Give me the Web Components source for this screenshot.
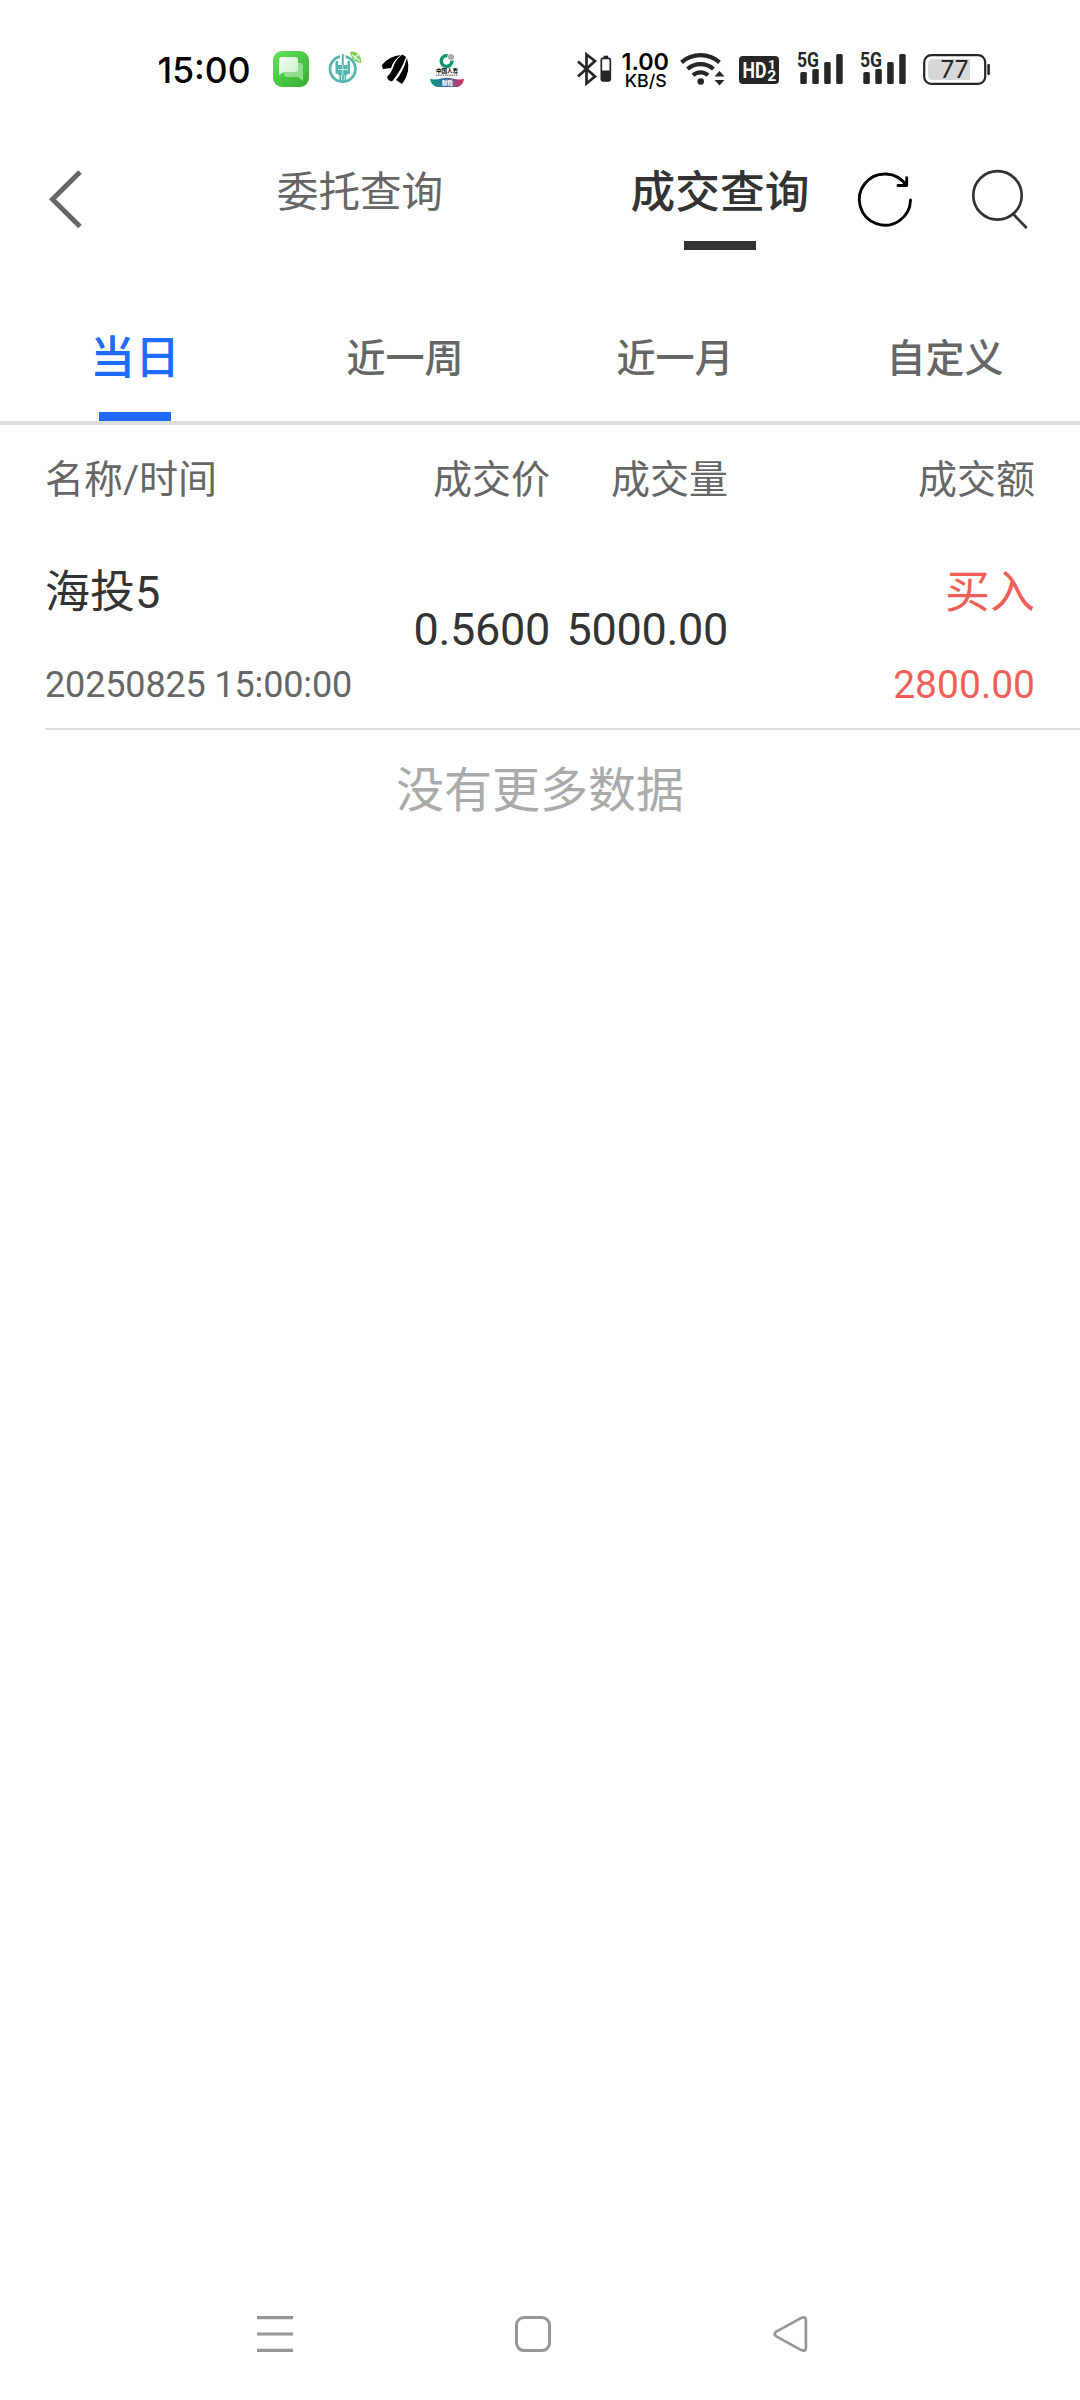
<!DOCTYPE html>
<html lang="zh-CN">
<head>
<meta charset="utf-8">
<title>成交查询</title>
<style>
html,body{margin:0;padding:0;background:#fff}
body{width:1080px;height:2400px;overflow:hidden;font-family:Roboto,"Noto Sans CJK SC",sans-serif;color:#333}
</style>
</head>
<body>
<trade-app></trade-app>
<script>
const define = (name, html) => {
  const t = document.createElement('template');
  t.innerHTML = html;
  customElements.define(name, class extends HTMLElement {
    constructor() {
      super();
      this.attachShadow({ mode: 'open' }).append(t.content.cloneNode(true));
    }
  });
};

define('signal-icon', `
<style>:host{display:block;width:48px;height:36px}svg{display:block;overflow:visible}</style>
<svg width="48" height="36" fill="#262626">
  <text x="0" y="15.800" font-family="Roboto" font-size="20.500" font-weight="700" textLength="22" lengthAdjust="spacingAndGlyphs">5G</text>
  <rect x="3.300" y="21" width="6.500" height="12" rx="1.500"/>
  <rect x="15.300" y="18" width="6.500" height="15" rx="1.500"/>
  <rect x="27.200" y="11" width="6.500" height="22" rx="1.500"/>
  <rect x="39.200" y="3" width="6.500" height="30" rx="1.500"/>
</svg>`);

define('status-bar', `
<style>
:host{display:flex;height:140px;box-sizing:border-box;padding:48px 88px 0 156px;justify-content:space-between;align-items:flex-start}
div{display:flex;align-items:flex-start}
svg{display:block;flex:none;overflow:visible}
</style>
<div>
  <svg width="96" height="42"><text x="1.500" y="34.600" font-family="Inter" font-size="36" font-weight="450" textLength="93" lengthAdjust="spacingAndGlyphs">15:00</text></svg>
  <svg width="38" height="42" style="margin-left:20px">
    <defs>
      <linearGradient id="g" x1="0" y1="0" x2="1" y2="1"><stop offset="0" stop-color="#62e45c"/><stop offset="1" stop-color="#35ad30"/></linearGradient>
      <linearGradient id="w" x1="0" y1="0" x2="1" y2="1"><stop offset="0" stop-color="#fff"/><stop offset="1" stop-color="#c9f3c7"/></linearGradient>
    </defs>
    <rect x="1" y="3" width="36" height="36" rx="9" fill="url(#g)"/>
    <path d="M15 15h13q3 0 3 3v15l-5-4H15q-3 0-3-3v-8q0-3 3-3z" fill="#9fe09b" opacity=".85"/>
    <path d="M10 9h13q3 0 3 3v9q0 3-3 3H12l-5 3V12q0-3 3-3z" fill="url(#w)" opacity=".95"/>
  </svg>
  <svg width="36" height="42" style="margin-left:17px">
    <circle cx="15.700" cy="21" r="12.700" fill="none" stroke="#55b5ad" stroke-width="2.700"/>
    <path d="M13 3h5.400v12H13z" fill="#fff"/>
    <path d="M14.800 6v28h2V6zM8.500 13h2.500v10h3v10h-1.700v-7.200H8.500zM20.500 13h2.500v12.800h-3.800V33h-1.700V23h3z" fill="#55b5ad"/>
    <path d="M11 17h9.600v10H11z" fill="#55b5ad"/>
    <path d="M11 21.500h10M15.800 17v10" stroke="#fff" stroke-width=".7"/>
    <path d="M23 4q5-2 9 3 3 4 2 8-7-1-9-5-1-3-2-6z" fill="#7bcf5b"/>
    <path d="M25 7l8 6M31 6l-4 6" stroke="#f4fff0" stroke-width="1.300"/>
  </svg>
  <svg width="28" height="42" style="margin-left:18px">
    <path d="M1 17Q8 8 20 7Q13 11 10 20L2 21Q1 19 1 17ZM21.500 6.500L25 9Q20 23 11 33.500Q7 33 6 29Q11 24 13 17Q16 10 21.500 6.500ZM26 10Q28 17 27 23Q25 31 21 36L15 32Q22 24 26 10Z" fill="#000"/>
  </svg>
  <svg width="36" height="42" style="margin-left:20px">
    <defs><linearGradient id="r"><stop offset="0" stop-color="#0a9472"/><stop offset=".45" stop-color="#376fa0"/><stop offset=".75" stop-color="#8b4c82"/><stop offset="1" stop-color="#ed234b"/></linearGradient></defs>
    <path d="M18.500 7.700a5.400 5.400 0 1 0 4.500 5" fill="none" stroke="#09946b" stroke-width="3.400"/>
    <circle cx="22" cy="9" r="3" fill="#aaa"/>
    <text x="7" y="25.300" font-family="Noto Sans CJK SC" font-size="5.600" font-weight="700" textLength="22" lengthAdjust="spacing">中国人寿</text>
    <path d="M7 27.200h22" stroke="#555" stroke-width="1" stroke-dasharray="1.500 .7"/>
    <path d="M1 31q6 1 11-.5 6-1.500 12 0 5 1.500 11 .5-1 6-6 8H8q-6-2-7-8z" fill="url(#r)"/>
    <text x="13" y="37" font-family="Noto Sans CJK SC" font-size="5.500" font-weight="900" fill="#fff" textLength="11">财险</text>
  </svg>
</div>
<div>
  <svg width="36" height="42">
    <path d="M2 13.500L19 28.500L10.500 35.500V6.500L19 13L2 28.500" fill="none" stroke="#262626" stroke-width="2.700"/>
    <rect x="25.300" y="10.300" width="9" height="22.500" rx="1.500" fill="none" stroke="#262626" stroke-width="1.700"/>
    <rect x="27.500" y="7.700" width="4.700" height="2.500" fill="#262626"/><rect x="25.500" y="22.500" width="8.600" height="10" fill="#262626"/>
  </svg>
  <svg width="48" height="44" style="margin-left:10px" font-family="Inter" fill="#000">
    <text x="-.5" y="22" font-size="23" font-weight="600" textLength="47.500" lengthAdjust="spacingAndGlyphs">1.00</text>
    <text x="2.800" y="38.500" font-size="17.500" font-weight="550" textLength="42" lengthAdjust="spacingAndGlyphs">KB/S</text>
  </svg>
  <svg width="46" height="42" style="margin-left:10px">
    <g fill="none" stroke="#262626" stroke-width="4.200"><path d="M1.500 14.300a29 29 0 0 1 38 0M7.500 21a19.500 19.500 0 0 1 26 0M13 27.300a11 11 0 0 1 15 0"/></g>
    <circle cx="20.700" cy="33.500" r="3.300" fill="#262626"/>
    <path d="M34.500 28.500l5-5.500 5 5.500zM34.500 32l5 5.500 5-5.500z" fill="#262626"/>
  </svg>
  <svg width="42" height="42" style="margin-left:12px" font-family="Roboto" font-weight="700" fill="#fff">
    <rect x="1" y="8" width="40" height="28" rx="4" fill="#262626"/>
    <text x="4.500" y="30" font-size="22.500" textLength="24" lengthAdjust="spacingAndGlyphs">HD</text>
    <text x="30" y="20.500" font-size="13.500">1</text><text x="29.300" y="33" font-size="14" textLength="9" lengthAdjust="spacingAndGlyphs">2</text>
  </svg>
  <signal-icon style="margin:3px 0 0 17px"></signal-icon>
  <signal-icon style="margin:3px 0 0 15px"></signal-icon>
  <svg width="69" height="42" style="margin-left:15px">
    <rect x="1.200" y="7.200" width="61" height="28.600" rx="7" fill="none" stroke="#262626" stroke-width="2.200"/>
    <path d="M10 11h37v21H10q-5 0-5-5V16q0-5 5-5z" fill="#d8d8d8"/>
    <rect x="64.300" y="16" width="2.600" height="11" rx="1" fill="#262626"/>
    <text x="17.500" y="30.100" font-family="Inter" font-size="24" textLength="28" lengthAdjust="spacingAndGlyphs" fill="#262626">77</text>
  </svg>
</div>`);

define('title-tab', `
<style>
:host{display:flex;flex:1;flex-direction:column;align-items:center;color:#666;font-size:41.600px;line-height:66px;padding-top:20px}
:host([active]){color:#333;font-size:44.700px;font-weight:500}
i{display:none;width:72px;height:9px;background:#333;margin-top:15px}
:host([active]) i{display:block}
</style><span><slot></slot></span><i></i>`);

define('title-bar', `
<style>
:host{display:grid;grid-template-columns:180px 720px 180px;height:170px}
nav{display:flex}
svg{display:block}
.tools{display:flex;margin-left:-46px;padding-top:28px;gap:51px}
.back{padding:28px 0 0 45px}
</style>
<div class="back"><svg width="42" height="66"><path d="M35 4L7.500 31.300L35 58.500" fill="none" stroke="#666" stroke-width="5"/></svg></div>
<nav><title-tab>委托查询</title-tab><title-tab active>成交查询</title-tab></nav>
<div class="tools">
  <svg width="62" height="66" fill="none" stroke="#000" stroke-width="2.900" stroke-linecap="round" stroke-linejoin="round"><path d="M56.500 32A25.600 25.600 0 1 1 52.300 17.500M52.700 9.800V17.500H44"/></svg>
  <svg width="66" height="66" fill="none" stroke="#333" stroke-width="2.700" stroke-linecap="round"><circle cx="30.500" cy="27.400" r="24.200"/><path d="M46.700 46.500L58.900 59.300"/></svg>
</div>`);

define('range-tab', `
<style>
:host{display:flex;flex:1;flex-direction:column;align-items:center;color:#666;font-size:39px;font-weight:500;line-height:66px;padding-top:16px}
:host([active]){color:#1f6bff;font-size:45px}
span{height:66px}
i{display:none;width:72px;height:9px;background:#1f6bff;margin-top:20px}
:host([active]) i{display:block}
</style><span><slot></slot></span><i></i>`);

define('range-tabs', `
<style>:host{display:flex;height:111px;border-bottom:4px solid #dcdcdc}</style>
<slot></slot>`);

define('trade-columns', `
<style>
:host{display:grid;grid-template-columns:275px 230px 178px 307px;padding:0 45px;height:110px;line-height:110px;font-size:39px;color:#666;text-align:right}
span:first-of-type{text-align:left}
</style><span>名称/时间</span><span>成交价</span><span>成交量</span><span>成交额</span>`);

define('trade-row', `
<style>
:host{display:grid;grid-template-columns:351px 154px 178px 307px;height:193px;margin-left:45px;padding-right:45px;border-bottom:2px solid #dcdcdc;font-size:45px;text-align:right;white-space:nowrap}
.two{display:flex;flex-direction:column;padding-top:25px}
.two slot{display:block;line-height:66px}
.left{text-align:left}
.left slot+slot{font-size:36px;color:#666;padding-top:26px;letter-spacing:-.15px}
.red{color:#ef5f57}
.red slot+slot{font-size:39px;padding-top:26px}
.num{line-height:190px;letter-spacing:-.3px}
.price{margin-left:-60px}
</style>
<div class="two left"><slot name="name"></slot><slot name="time"></slot></div>
<div class="num price"><slot name="price"></slot></div>
<div class="num"><slot name="volume"></slot></div>
<div class="two red"><slot name="side"></slot><slot name="amount"></slot></div>`);

define('system-nav', `
<style>
:host{display:flex;height:136px;box-sizing:border-box;padding:48px 267px 0 253px;justify-content:space-between}
svg{display:block}
</style>
<svg width="44" height="48" stroke="#969696" stroke-width="3.200"><path d="M4 5.700H40M4 22H40M4 38.400H40"/></svg>
<svg width="44" height="48" fill="none" stroke="#969696" stroke-width="3"><rect x="5.500" y="5.600" width="33" height="33" rx="7.500"/></svg>
<svg width="44" height="48" fill="none" stroke="#969696" stroke-width="2.700"><path d="M7.300 19.600L32.300 5.900Q36.900 4 36.900 8.300V35.700Q36.900 40 32.300 38.100L7.300 24.400Q3.800 22 7.300 19.600Z"/></svg>`);

define('trade-app', `
<style>
:host{display:flex;flex-direction:column;width:1080px;height:2400px;background:#fff}
.empty{font-size:48px;line-height:70px;text-align:center;color:#aaa;padding-top:26px}
main{flex:1}
</style>
<status-bar></status-bar>
<title-bar></title-bar>
<range-tabs><range-tab active>当日</range-tab><range-tab>近一周</range-tab><range-tab>近一月</range-tab><range-tab>自定义</range-tab></range-tabs>
<main>
<trade-columns></trade-columns>
<trade-row><span slot="name">海投5</span><span slot="time">20250825 15:00:00</span><span slot="price">0.5600</span><span slot="volume">5000.00</span><span slot="side">买入</span><span slot="amount">2800.00</span></trade-row>
<div class="empty">没有更多数据</div>
</main>
<system-nav></system-nav>`);
</script>
</body>
</html>
